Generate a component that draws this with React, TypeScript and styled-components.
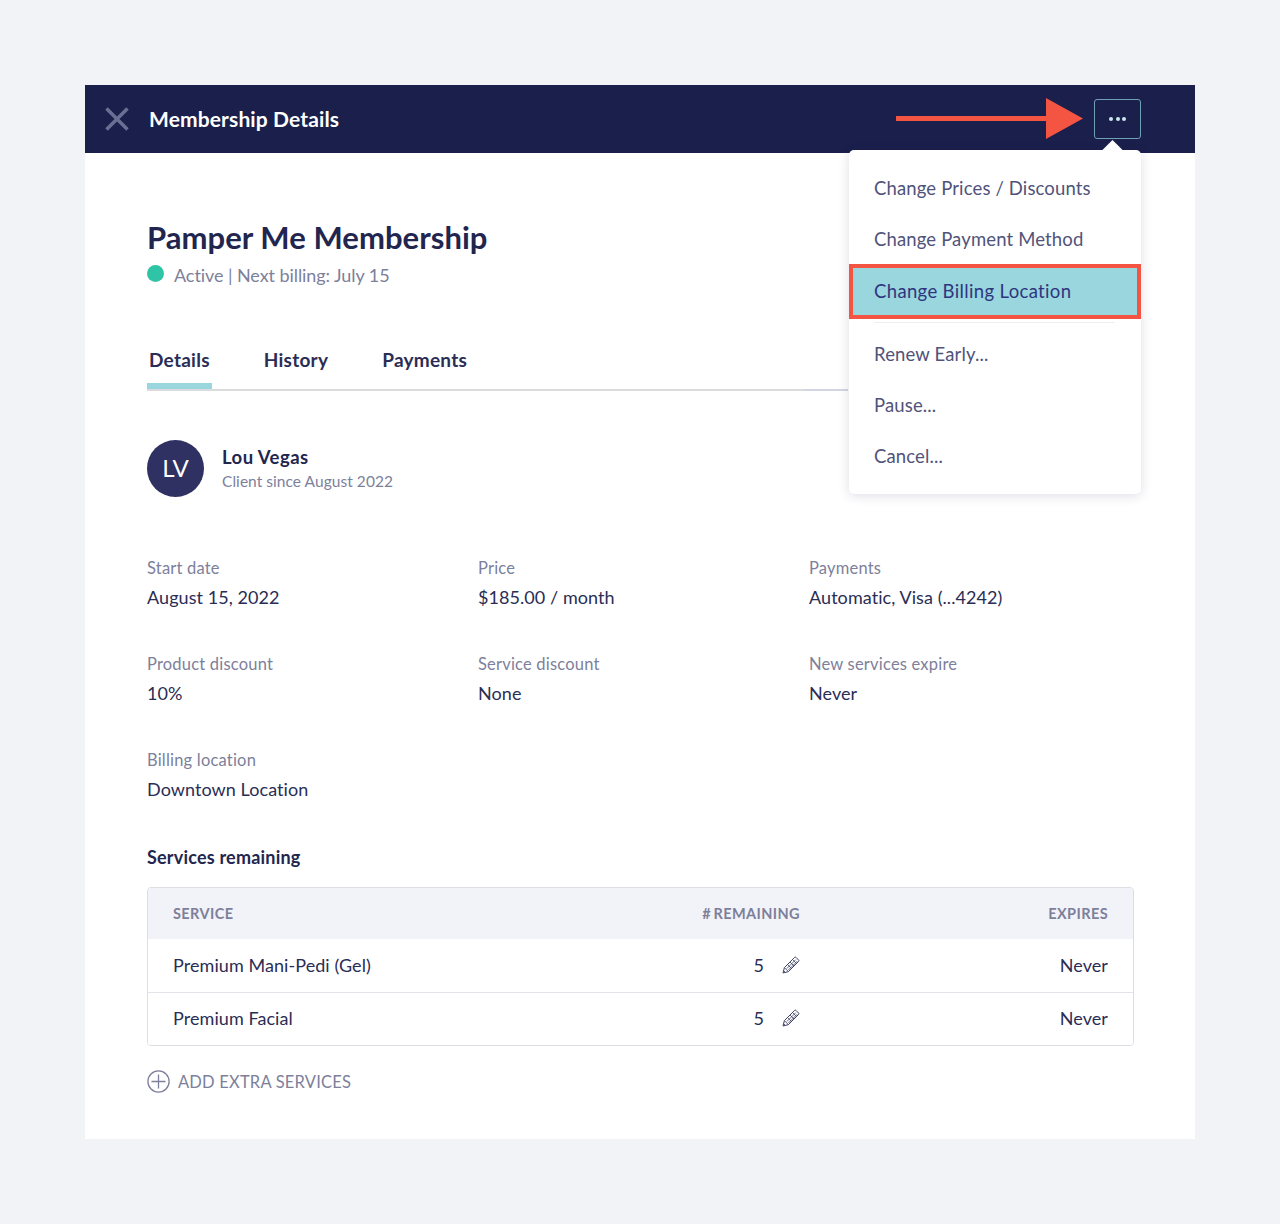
import React from 'react';
import styled, { createGlobalStyle } from 'styled-components';

const GlobalStyle = createGlobalStyle`
  html, body {
    margin: 0;
    padding: 0;
    background: #f1f3f7;
    font-family: 'Lato', 'Liberation Sans', sans-serif;
  }
  * { box-sizing: border-box; }
`;

const Page = styled.div`
  height: 1224px;
  padding: 85px 85px 0;
`;

const Card = styled.main`
  position: relative;
  width: 1110px;
  height: 1054px;
  background: #fff;
`;

const Header = styled.header`
  height: 68px;
  background: #1a1f4b;
  display: flex;
  align-items: center;
  padding-left: 20px;
  gap: 20px;
`;

const HeaderTitle = styled.h2`
  margin: -2px 0 0;
  color: #fff;
  font-size: 21px;
  font-weight: 700;
  letter-spacing: 0.13px;
`;

const MoreButton = styled.button`
  position: absolute;
  top: 14px;
  left: 1009px;
  width: 47px;
  height: 40px;
  padding: 0;
  border: 1.5px solid #6f9fb3;
  border-radius: 3px;
  background: transparent;
  display: flex;
  align-items: center;
  justify-content: center;
  gap: 2.5px;
`;

const Dot = styled.span`
  width: 4px;
  height: 4px;
  border-radius: 50%;
  background: #c9e8ee;
`;

const Arrow = styled.svg`
  position: absolute;
  top: 13px;
  left: 811px;
`;

const Menu = styled.div`
  position: absolute;
  top: 65px;
  left: 764px;
  width: 292px;
  height: 344px;
  padding-top: 12px;
  background: #fff;
  border-radius: 5px;
  box-shadow: 0 2px 12px rgba(26, 31, 75, 0.14);
  &::before {
    content: '';
    position: absolute;
    top: -7px;
    left: 256px;
    width: 15px;
    height: 15px;
    background: #fff;
    transform: rotate(45deg);
  }
`;

const MenuItem = styled.div<{ $active?: boolean }>`
  position: relative;
  height: ${p => (p.$active ? '55px' : '51px')};
  display: flex;
  align-items: center;
  padding-left: ${p => (p.$active ? '21px' : '25px')};
  padding-bottom: ${p => (p.$active ? '2px' : '0')};
  font-size: 18.5px;
  letter-spacing: ${p => (p.$active ? '0.35px' : '0.14px')};
  color: ${p => (p.$active ? '#2e3580' : '#50537a')};
  background: ${p => (p.$active ? '#9ad6dd' : 'transparent')};
  border: ${p => (p.$active ? '4px solid #f45442' : 'none')};
`;

const MenuDivider = styled.div`
  height: 1px;
  margin: 3px 26px 5px 25px;
  background: #eceef2;
`;

const Content = styled.div`
  padding: 66px 61px 0 62px;
`;

const Title = styled.h1`
  margin: 0;
  font-size: 31px;
  line-height: 37px;
  font-weight: 700;
  letter-spacing: 0.05px;
  color: #22264e;
`;

const Status = styled.div`
  display: flex;
  align-items: center;
  gap: 10px;
  margin-top: 7px;
  font-size: 18px;
  line-height: 24px;
  letter-spacing: -0.07px;
  color: #7d7f9b;
`;

const StatusDot = styled.span`
  width: 17px;
  height: 17px;
  border-radius: 50%;
  background: #2fc4a5;
  margin-top: -3px;
`;

const Tabs = styled.nav`
  display: flex;
  height: 60px;
  margin-top: 44px;
  width: 701px;
  border-bottom: 2px solid;
  border-image: linear-gradient(to right, #dcdcde 656px, #d3d5e3 656px) 1;
`;

const Tab = styled.div<{ $active?: boolean }>`
  height: 58px;
  padding: 17px 2px 0;
  margin-right: 50px;
  font-size: 19px;
  font-weight: 700;
  letter-spacing: 0.25px;
  color: #2a2d55;
  border-bottom: ${p => (p.$active ? '6px solid #9ad6dd' : 'none')};
`;

const Client = styled.section`
  display: flex;
  align-items: center;
  gap: 18px;
  margin-top: 49px;
`;

const Avatar = styled.div`
  width: 57px;
  height: 57px;
  padding-bottom: 2px;
  border-radius: 50%;
  background: #2e3161;
  color: #fff;
  display: flex;
  align-items: center;
  justify-content: center;
  font-size: 24px;
`;

const ClientName = styled.div`
  font-size: 18.5px;
  line-height: 24px;
  font-weight: 700;
  letter-spacing: 0.45px;
  color: #22264e;
`;

const ClientSince = styled.div`
  font-size: 15.5px;
  line-height: 24px;
  letter-spacing: 0.05px;
  color: #7d7f9b;
`;

const Fields = styled.section`
  display: grid;
  grid-template-columns: 331px 331px 1fr;
  row-gap: 42px;
  margin-top: 59px;
`;

const FieldLabel = styled.div`
  font-size: 16.5px;
  line-height: 24px;
  letter-spacing: 0.2px;
  color: #7d7f9b;
`;

const FieldValue = styled.div`
  margin-top: 5px;
  font-size: 18px;
  line-height: 25px;
  letter-spacing: 0.07px;
  color: #2a2d55;
`;

const SectionTitle = styled.h3`
  margin: 43px 0 18px;
  font-size: 18px;
  line-height: 24px;
  font-weight: 700;
  letter-spacing: 0.2px;
  color: #22264e;
`;

const Table = styled.div`
  border: 1px solid #dcdee4;
  border-radius: 4px;
  overflow: hidden;
`;

const Row = styled.div<{ $head?: boolean }>`
  display: grid;
  grid-template-columns: 1fr 120px 308px;
  align-items: center;
  height: ${p => (p.$head ? '51px' : '53px')};
  padding: ${p => (p.$head ? '0 25px' : '0 25px 2px')};
  background: ${p => (p.$head ? '#f2f3f8' : '#fff')};
  & + & + & { border-top: 1px solid #e3e5ea; }
`;

const HeadCell = styled.div<{ $align?: string }>`
  font-size: 14.5px;
  font-weight: 700;
  letter-spacing: 0.4px;
  word-spacing: -1.5px;
  color: #7d7f9b;
  text-align: ${p => p.$align || 'left'};
`;

const Cell = styled.div<{ $align?: string }>`
  font-size: 18px;
  letter-spacing: 0.07px;
  color: #2a2d55;
  text-align: ${p => p.$align || 'left'};
`;

const CountCell = styled(Cell)`
  display: flex;
  align-items: center;
  justify-content: flex-end;
  gap: 18px;
`;

const AddLink = styled.div`
  display: flex;
  align-items: center;
  gap: 8px;
  margin-top: 24px;
  font-size: 16.5px;
  letter-spacing: 0.2px;
  color: #7d7f9b;
`;

const fields = [
  ['Start date', 'August 15, 2022'],
  ['Price', '$185.00 / month'],
  ['Payments', 'Automatic, Visa (...4242)'],
  ['Product discount', '10%'],
  ['Service discount', 'None'],
  ['New services expire', 'Never'],
  ['Billing location', 'Downtown Location'],
];

const services = ['Premium Mani-Pedi (Gel)', 'Premium Facial'];

function CloseIcon() {
  return (
    <svg width="24" height="24" viewBox="0 0 24 24" fill="none">
      <path d="M1.500 1.500l21 21M22.500 1.500l-21 21" stroke="#6b6f94" strokeWidth="3.500" />
    </svg>
  );
}

function PencilIcon() {
  return (
    <svg width="18" height="18" viewBox="0 0 18 18" fill="none" stroke="#3f4264" strokeWidth="1" strokeLinejoin="round">
      <path d="M1 17l1.400-5.400L12.600 1.400a1 1 0 0 1 1.400 0l2.600 2.600a1 1 0 0 1 0 1.400L6.400 15.600z" />
      <path d="M2.400 11.600l4 4M5.500 8.500L9.500 12.500M8 6L12 10M10.500 3.500L14.500 7.500M4.800 12.600L13.800 3.600M6.300 14.100L15.300 5.100M1.600 14.600l1.800 1.800" strokeWidth="0.8" />
    </svg>
  );
}

function PlusCircleIcon() {
  return (
    <svg width="23" height="23" viewBox="0 0 23 23" fill="none" stroke="#7d7f9b" strokeWidth="1.300">
      <circle cx="11.500" cy="11.500" r="10.600" />
      <path d="M11.500 4.500v14M4.500 11.500h14" />
    </svg>
  );
}

export default function App() {
  return (
    <Page>
      <GlobalStyle />
      <Card>
        <Header>
          <CloseIcon />
          <HeaderTitle>Membership Details</HeaderTitle>
        </Header>
        <Arrow width="190" height="42" viewBox="0 0 190 42">
          <path d="M0 18h150V0l37 20.500L150 41V23H0z" fill="#f45442" />
        </Arrow>
        <MoreButton aria-label="More">
          <Dot />
          <Dot />
          <Dot />
        </MoreButton>
        <Menu>
          <MenuItem>Change Prices / Discounts</MenuItem>
          <MenuItem>Change Payment Method</MenuItem>
          <MenuItem $active>Change Billing Location</MenuItem>
          <MenuDivider />
          <MenuItem>Renew Early...</MenuItem>
          <MenuItem>Pause...</MenuItem>
          <MenuItem>Cancel...</MenuItem>
        </Menu>
        <Content>
          <Title>Pamper Me Membership</Title>
          <Status>
            <StatusDot />
            Active | Next billing: July 15
          </Status>
          <Tabs>
            <Tab $active>Details</Tab>
            <Tab>History</Tab>
            <Tab>Payments</Tab>
          </Tabs>
          <Client>
            <Avatar>LV</Avatar>
            <div>
              <ClientName>Lou Vegas</ClientName>
              <ClientSince>Client since August 2022</ClientSince>
            </div>
          </Client>
          <Fields>
            {fields.map(([label, value]) => (
              <div key={label}>
                <FieldLabel>{label}</FieldLabel>
                <FieldValue>{value}</FieldValue>
              </div>
            ))}
          </Fields>
          <SectionTitle>Services remaining</SectionTitle>
          <Table>
            <Row $head>
              <HeadCell>SERVICE</HeadCell>
              <HeadCell $align="right"># REMAINING</HeadCell>
              <HeadCell $align="right">EXPIRES</HeadCell>
            </Row>
            {services.map(name => (
              <Row key={name}>
                <Cell>{name}</Cell>
                <CountCell>
                  5
                  <PencilIcon />
                </CountCell>
                <Cell $align="right">Never</Cell>
              </Row>
            ))}
          </Table>
          <AddLink>
            <PlusCircleIcon />
            ADD EXTRA SERVICES
          </AddLink>
        </Content>
      </Card>
    </Page>
  );
}
